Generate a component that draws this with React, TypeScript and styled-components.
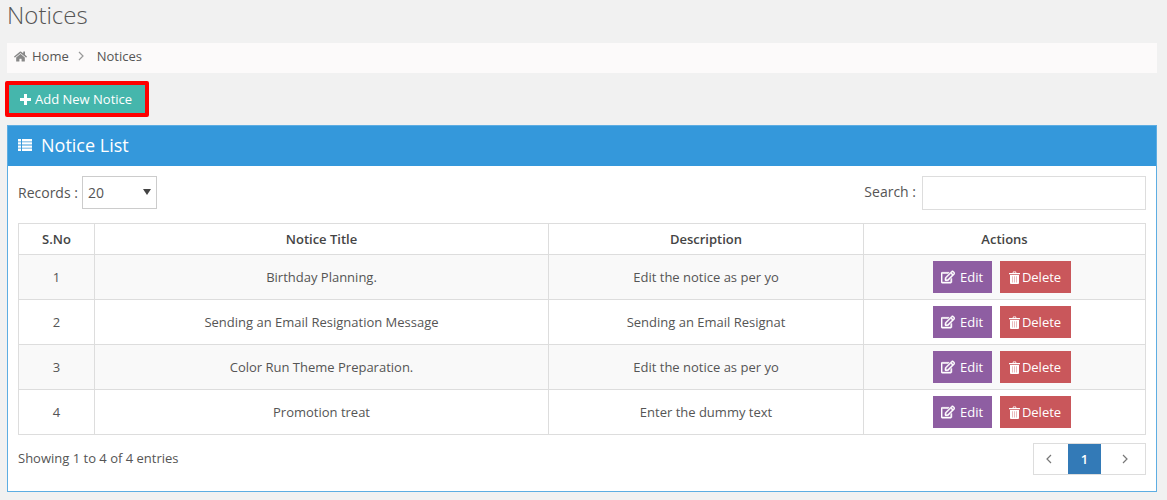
import React from 'react'
import styled, { createGlobalStyle } from 'styled-components'
import { FaHome, FaRegEdit } from 'react-icons/fa'

const Global = createGlobalStyle`
  html, body { margin: 0; padding: 0; background: #f1f1f1; }
  body { font-family: "Open Sans", "Liberation Sans", sans-serif; font-size: 13px; color: #555; overflow: hidden; }
  * { box-sizing: border-box; }
`

const Page = styled.div`
  width: 1167px;
  height: 500px;
  padding: 0 10px 0 7px;
`

const Title = styled.h1`
  margin: 0;
  height: 43px;
  font-size: 24px;
  line-height: 30px;
  font-weight: 300;
  color: #555;
`

const Crumbs = styled.div`
  height: 30px;
  background: #fcfafa;
  display: flex;
  align-items: center;
  padding: 0 0 4px 7px;
  color: #555;
  > svg:first-child { color: #888; }
`

const CrumbText = styled.span`
  margin-left: 5px;
`

const CrumbSep = styled.span`
  display: flex;
  margin: 0 13px 0 9px;
  color: #999;
`

const ActionRow = styled.div`
  padding: 8px 0;
  margin-left: -2px;
`

const Highlight = styled.div`
  display: inline-block;
  border: 4px solid #f00;
  border-radius: 2px;
`

const AddButton = styled.button`
  display: flex;
  align-items: center;
  gap: 4px;
  width: 136px;
  height: 28px;
  padding: 0 0 0 11px;
  border: 0;
  background: #45b6ac;
  color: #fff;
  font: 13px "Open Sans", sans-serif;
`

const Panel = styled.section`
  height: 367px;
  background: #fff;
  border: 1px solid #5dade2;
`

const PanelHead = styled.header`
  height: 40px;
  background: #3498db;
  color: #fff;
  display: flex;
  align-items: center;
  gap: 9px;
  padding: 0 0 2px 10px;
  font-size: 18px;
`

const PanelBody = styled.div`
  padding: 10px 10px 0 10px;
`

const Controls = styled.div`
  display: flex;
  justify-content: space-between;
  align-items: center;
  height: 33px;
  margin-bottom: 14px;
  font-size: 14px;
`

const Field = styled.label`
  display: flex;
  align-items: center;
  gap: 4px;
`

const SearchField = styled(Field)`
  gap: 6px;
  span { margin-bottom: 2px; }
`

const SelectBox = styled.div`
  position: relative;
  width: 75px;
  height: 33px;
  border: 1px solid #ccc;
  display: flex;
  align-items: center;
  padding-left: 5px;
  font-size: 14px;
  &::after {
    content: '';
    position: absolute;
    right: 5px;
    top: 12px;
    border: 4px solid transparent;
    border-top: 6px solid #444;
    border-bottom: 0;
  }
`

const SearchInput = styled.input`
  width: 224px;
  height: 34px;
  border: 1px solid #ddd;
  background: #fff;
`

const Table = styled.table`
  width: 1128px;
  border-collapse: collapse;
  table-layout: fixed;
  text-align: center;
`

const Th = styled.th<{ $w?: number }>`
  width: ${p => (p.$w ? `${p.$w}px` : 'auto')};
  height: 31px;
  padding: 0;
  border: 1px solid #ddd;
  font-weight: 600;
  font-size: 13px;
  color: #444;
`

const Row = styled.tr<{ $odd: boolean }>`
  background: ${p => (p.$odd ? '#f9f9f9' : '#fff')};
`

const Td = styled.td`
  height: 45px;
  padding: 0;
  border: 1px solid #ddd;
`

const Buttons = styled.div`
  display: flex;
  justify-content: center;
  gap: 8px;
  padding-right: 6px;
`

const RowButton = styled.button<{ $bg: string; $w: number; $gap: number }>`
  width: ${p => p.$w}px;
  height: 32px;
  display: flex;
  align-items: center;
  justify-content: center;
  gap: ${p => p.$gap}px;
  padding: 0;
  border: 0;
  background: ${p => p.$bg};
  color: #fff;
  font: 13px "Open Sans", sans-serif;
`

const EditIcon = styled(FaRegEdit)`
  stroke: #fff;
  stroke-width: 20;
`

const Footer = styled.div`
  display: flex;
  justify-content: space-between;
  align-items: flex-start;
  padding-top: 8px;
`

const Info = styled.div`
  padding-top: 6px;
`

const Pager = styled.nav`
  display: flex;
  height: 32px;
  border: 1px solid #ddd;
`

const PageCell = styled.span<{ $active?: boolean; $w: number; $pad?: string }>`
  width: ${p => p.$w}px;
  padding: ${p => p.$pad || '0'};
  display: flex;
  align-items: center;
  justify-content: center;
  background: ${p => (p.$active ? '#337ab7' : '#fff')};
  color: ${p => (p.$active ? '#fff' : '#777')};
  font-weight: ${p => (p.$active ? 600 : 400)};
`

const Chevron = ({ left }: { left?: boolean }) => (
  <svg width="6" height="10" viewBox="0 0 6 10" fill="none" stroke="currentColor" strokeWidth="1.2">
    <path d={left ? 'M5 1 1 5l4 4' : 'M1 1l4 4-4 4'} />
  </svg>
)

const PlusIcon = () => (
  <svg width="11" height="11" viewBox="0 0 11 11" fill="#fff">
    <path d="M4 0h3v4h4v3H7v4H4V7H0V4h4z" />
  </svg>
)

const ListIcon = () => (
  <svg width="14" height="12" viewBox="0 0 14 12" fill="#fff">
    <path d="M0 0h3v2.4H0zM4 0h10v2.4H4zM0 3.2h3v2.4H0zM4 3.2h10v2.4H4zM0 6.4h3v2.4H0zM4 6.4h10v2.4H4zM0 9.6h3V12H0zM4 9.6h10V12H4z" />
  </svg>
)

const TrashIcon = () => (
  <svg width="11" height="13" viewBox="0 0 11 13" fill="#fff">
    <path fillRule="evenodd" d="M3.5 2 4.2.5h2.6L7.5 2H11v1.2H0V2zM4.7 1.3 4.4 2h2.2l-.3-.7z" />
    <path d="M1 4h9v8a1 1 0 0 1-1 1H2a1 1 0 0 1-1-1z" />
    <path fill="#c9575b" opacity=".45" d="M3 5.2h.9v6.2H3zM5.05 5.2h.9v6.2h-.9zM7.1 5.2H8v6.2h-.9z" />
  </svg>
)

const rows = [
  ['Birthday Planning.', 'Edit the notice as per yo'],
  ['Sending an Email Resignation Message', 'Sending an Email Resignat'],
  ['Color Run Theme Preparation.', 'Edit the notice as per yo'],
  ['Promotion treat', 'Enter the dummy text'],
]

const App = () => {
  return (
    <>
      <Global />
      <Page>
        <Title>Notices</Title>
        <Crumbs>
          <FaHome size={13} />
          <CrumbText>Home</CrumbText>
          <CrumbSep><Chevron /></CrumbSep>
          <span>Notices</span>
        </Crumbs>
        <ActionRow>
          <Highlight>
            <AddButton><PlusIcon /> Add New Notice</AddButton>
          </Highlight>
        </ActionRow>
        <Panel>
          <PanelHead><ListIcon /> Notice List</PanelHead>
          <PanelBody>
            <Controls>
              <Field>
                Records :
                <SelectBox>20</SelectBox>
              </Field>
              <SearchField>
                <span>Search :</span>
                <SearchInput />
              </SearchField>
            </Controls>
            <Table>
              <thead>
                <tr>
                  <Th $w={76}>S.No</Th>
                  <Th $w={454}>Notice Title</Th>
                  <Th $w={315}>Description</Th>
                  <Th>Actions</Th>
                </tr>
              </thead>
              <tbody>
                {rows.map((r, i) => (
                  <Row key={i} $odd={i % 2 === 0}>
                    <Td>{i + 1}</Td>
                    <Td>{r[0]}</Td>
                    <Td>{r[1]}</Td>
                    <Td>
                      <Buttons>
                        <RowButton $bg="#8e5ea2" $w={59} $gap={5}><EditIcon size={14} /> Edit</RowButton>
                        <RowButton $bg="#c9575b" $w={71} $gap={2}><TrashIcon /> Delete</RowButton>
                      </Buttons>
                    </Td>
                  </Row>
                ))}
              </tbody>
            </Table>
            <Footer>
              <Info>Showing 1 to 4 of 4 entries</Info>
              <Pager>
                <PageCell $w={34} $pad="0 4px 0 0"><Chevron left /></PageCell>
                <PageCell $w={33} $active>1</PageCell>
                <PageCell $w={44} $pad="0 0 0 4px"><Chevron /></PageCell>
              </Pager>
            </Footer>
          </PanelBody>
        </Panel>
      </Page>
    </>
  )
}

export default App
